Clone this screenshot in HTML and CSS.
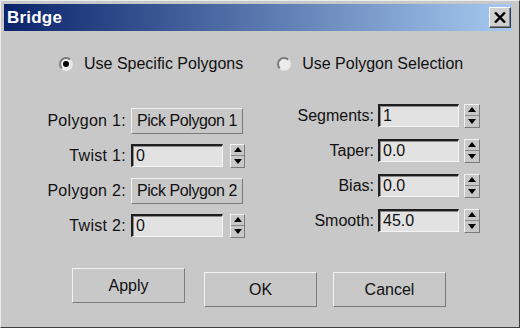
FILE: index.html
```html
<!DOCTYPE html>
<html lang="en">
<head>
    <meta charset="UTF-8">
    <title>Bridge</title>
    <link rel="stylesheet" href="styles.css">
</head>
<body>
    <div class="window">
        <!-- Title bar -->
        <div class="titlebar">
            <span class="title">Bridge</span>
            <button class="close-btn">
                <svg width="12" height="11" viewBox="0 0 12 11">
                    <path d="M1 0.5 L11 10.5 M11 0.5 L1 10.5" stroke="#000" stroke-width="2.4" fill="none"/>
                </svg>
            </button>
        </div>

        <div class="content">
            <!-- Mode radios -->
            <div class="radios">
                <label class="radio"><span class="dot checked"></span>Use Specific Polygons</label>
                <label class="radio second"><span class="dot"></span>Use Polygon Selection</label>
            </div>

            <div class="fields">
                <!-- Left column -->
                <div class="column left-col">
                    <div class="row">
                        <span class="label">Polygon 1:</span>
                        <button class="pick-btn">Pick Polygon 1</button>
                    </div>
                    <div class="row">
                        <span class="label">Twist 1:</span>
                        <div class="edit">0</div>
                        <div class="spinner"><span class="up"></span><span class="down"></span></div>
                    </div>
                    <div class="row">
                        <span class="label">Polygon 2:</span>
                        <button class="pick-btn">Pick Polygon 2</button>
                    </div>
                    <div class="row">
                        <span class="label">Twist 2:</span>
                        <div class="edit">0</div>
                        <div class="spinner"><span class="up"></span><span class="down"></span></div>
                    </div>
                </div>

                <!-- Right column -->
                <div class="column right-col">
                    <div class="row">
                        <span class="label">Segments:</span>
                        <div class="edit">1</div>
                        <div class="spinner"><span class="up"></span><span class="down"></span></div>
                    </div>
                    <div class="row">
                        <span class="label">Taper:</span>
                        <div class="edit">0.0</div>
                        <div class="spinner"><span class="up"></span><span class="down"></span></div>
                    </div>
                    <div class="row">
                        <span class="label">Bias:</span>
                        <div class="edit">0.0</div>
                        <div class="spinner"><span class="up"></span><span class="down"></span></div>
                    </div>
                    <div class="row">
                        <span class="label">Smooth:</span>
                        <div class="edit">45.0</div>
                        <div class="spinner"><span class="up"></span><span class="down"></span></div>
                    </div>
                </div>
            </div>

            <!-- Dialog buttons -->
            <div class="buttons">
                <button class="dlg-btn apply">Apply</button>
                <button class="dlg-btn ok">OK</button>
                <button class="dlg-btn cancel">Cancel</button>
            </div>
        </div>
    </div>
</body>
</html>
```

FILE: styles.css
```css
/* General Styles */
body {
    margin: 0;
    padding: 0;
    font-family: "Liberation Sans", Arial, sans-serif;
    font-size: 16px;
    color: #111;
    background: #c8c8c8;
}

.window {
    width: 520px;
    height: 328px;
    box-sizing: border-box;
    background: #c8c8c8;
    border: 1px solid;
    border-color: #ececec #3c3c3c #3c3c3c #ececec;
    padding: 3px 7px 0 3px;
    overflow: hidden;
}

/* Title bar */
.titlebar {
    height: 27px;
    display: flex;
    align-items: center;
    justify-content: space-between;
    background: linear-gradient(90deg, #0a246a 0%, #a6caf0 100%);
    padding: 0 1px 0 3px;
}

.title {
    color: #fff;
    font-weight: bold;
    font-size: 17px;
    letter-spacing: 0.2px;
}

.close-btn {
    width: 22px;
    height: 21px;
    padding: 0;
    display: flex;
    align-items: center;
    justify-content: center;
    background: #cfcfcf;
    border: 1px solid;
    border-color: #ffffff #404040 #404040 #ffffff;
    box-shadow: inset -1px -1px 0 #808080;
}

/* Radios */
.radios {
    display: flex;
    align-items: center;
    height: 20px;
    margin-top: 23px;
    padding-left: 55px;
}

.radio {
    display: flex;
    align-items: center;
}

.radio.second {
    margin-left: 34px;
}

.dot {
    width: 10px;
    height: 10px;
    border-radius: 50%;
    border: 2px solid;
    border-color: #7a7a7a #e8e8e8 #e8e8e8 #7a7a7a;
    background: #ececec;
    margin-right: 11px;
    position: relative;
}

.dot.checked::after {
    content: "";
    position: absolute;
    left: 2px;
    top: 2px;
    width: 6px;
    height: 6px;
    border-radius: 50%;
    background: #000;
}

/* Fields */
.fields {
    display: flex;
    align-items: flex-start;
    margin-top: 24px;
    padding-left: 26px;
    gap: 39px;
}

.left-col {
    padding-top: 5px;
}

.row {
    display: flex;
    align-items: center;
    height: 35px;
}

.label {
    text-align: right;
    white-space: nowrap;
}

.left-col .label {
    width: 96px;
    margin-right: 5px;
    letter-spacing: 0.3px;
}

.right-col .label {
    width: 90px;
    margin-right: 4px;
}

.pick-btn {
    width: 112px;
    height: 26px;
    padding: 0;
    background: #c8c8c8;
    border: 1px solid;
    border-color: #f2f2f2 #7c7c7c #7c7c7c #f2f2f2;
    font-family: "Liberation Sans", Arial, sans-serif;
    font-size: 16px;
    letter-spacing: -0.4px;
    color: #111;
    white-space: nowrap;
}

.edit {
    box-sizing: border-box;
    height: 23px;
    padding-left: 3px;
    background: #e2e2e2;
    border-style: solid;
    border-width: 2px 1px 1px 2px;
    border-color: #1e1e1e #f4f4f4 #f4f4f4 #1e1e1e;
    box-shadow: inset 1px 1px 0 #8a8a8a;
    line-height: 20px;
}

.left-col .edit {
    width: 92px;
}

.right-col .edit {
    width: 81px;
}

.spinner {
    box-sizing: border-box;
    display: flex;
    flex-direction: column;
    height: 24px;
    border: 1px solid;
    border-color: #f2f2f2 #7c7c7c #7c7c7c #f2f2f2;
}

.left-col .spinner {
    width: 15px;
    margin-left: 7px;
}

.right-col .spinner {
    width: 16px;
    margin-left: 5px;
}

.spinner span {
    flex: 1;
    display: flex;
    align-items: center;
    justify-content: center;
}

.spinner .up {
    border-bottom: 1px solid #8a8a8a;
}

.spinner .up::before {
    content: "";
    border-left: 4px solid transparent;
    border-right: 4px solid transparent;
    border-bottom: 5px solid #000;
}

.spinner .down::before {
    content: "";
    border-left: 4px solid transparent;
    border-right: 4px solid transparent;
    border-top: 5px solid #000;
}

/* Dialog buttons */
.buttons {
    display: flex;
    align-items: flex-start;
    margin-top: 25px;
    padding-left: 68px;
}

.dlg-btn {
    width: 113px;
    height: 35px;
    padding: 0;
    background: #c8c8c8;
    border: 1px solid;
    border-color: #f2f2f2 #7c7c7c #7c7c7c #f2f2f2;
    font-family: "Liberation Sans", Arial, sans-serif;
    font-size: 16px;
    color: #111;
}

.ok {
    margin-top: 4px;
    margin-left: 19px;
}

.cancel {
    margin-top: 4px;
    margin-left: 16px;
}
```
